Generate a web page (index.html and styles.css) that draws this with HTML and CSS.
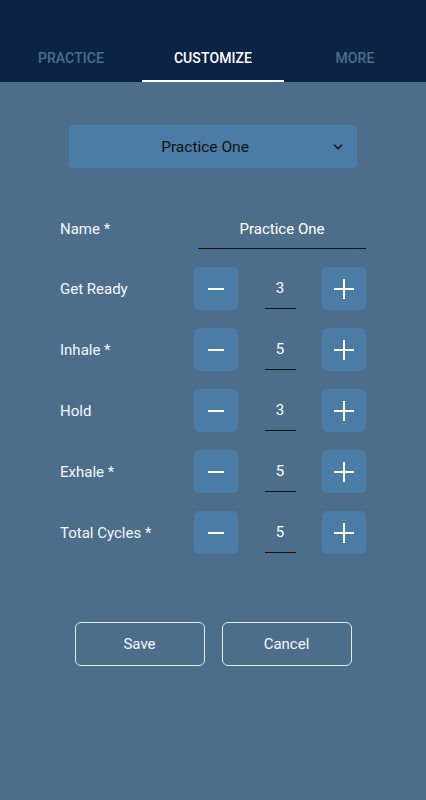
FILE: index.html
```html
<!DOCTYPE html>
<html>
<head>
<meta charset="utf-8">
<link rel="stylesheet" href="styles.css">
</head>
<body>
<header class="appbar">
  <nav class="tabs">
    <div class="tab">PRACTICE</div>
    <div class="tab active">CUSTOMIZE</div>
    <div class="tab">MORE</div>
  </nav>
</header>
<main class="content">
  <div class="select">
    <span class="select-text">Practice One</span>
    <svg class="chevron" width="12" height="8" viewBox="0 0 12 8"><path d="M2 1.8 L6 5.8 L10 1.8" fill="none" stroke="#111" stroke-width="1.5"/></svg>
  </div>
  <form class="form">
    <div class="row">
      <span class="label">Name *</span>
      <div class="text-input">Practice One</div>
    </div>
    <div class="row">
      <span class="label">Get Ready</span>
      <div class="stepper">
        <div class="step-btn"><span class="minus"></span></div>
        <div class="num">3</div>
        <div class="step-btn"><span class="plus"></span></div>
      </div>
    </div>
    <div class="row">
      <span class="label">Inhale *</span>
      <div class="stepper">
        <div class="step-btn"><span class="minus"></span></div>
        <div class="num">5</div>
        <div class="step-btn"><span class="plus"></span></div>
      </div>
    </div>
    <div class="row">
      <span class="label">Hold</span>
      <div class="stepper">
        <div class="step-btn"><span class="minus"></span></div>
        <div class="num">3</div>
        <div class="step-btn"><span class="plus"></span></div>
      </div>
    </div>
    <div class="row">
      <span class="label">Exhale *</span>
      <div class="stepper">
        <div class="step-btn"><span class="minus"></span></div>
        <div class="num">5</div>
        <div class="step-btn"><span class="plus"></span></div>
      </div>
    </div>
    <div class="row">
      <span class="label">Total Cycles *</span>
      <div class="stepper">
        <div class="step-btn"><span class="minus"></span></div>
        <div class="num">5</div>
        <div class="step-btn"><span class="plus"></span></div>
      </div>
    </div>
  </form>
  <div class="actions">
    <div class="btn">Save</div>
    <div class="btn">Cancel</div>
  </div>
</main>
</body>
</html>
```
FILE: styles.css
```css
* { box-sizing: border-box; }
html, body {
  margin: 0;
  padding: 0;
  height: 100%;
}
body {
  background: #4d6e8b;
  font-family: Roboto, "Liberation Sans", sans-serif;
  color: #f5f7fa;
}
.appbar {
  background: #0b2446;
  height: 82px;
  padding-top: 34px;
}
.tabs {
  display: flex;
  height: 48px;
}
.tab {
  flex: 1;
  display: flex;
  align-items: center;
  justify-content: center;
  font-size: 14px;
  font-weight: 500;
  letter-spacing: 0.1px;
  color: #4f6c8e;
  border-bottom: 2px solid transparent;
  padding-top: 2px;
}
.tab.active {
  color: #ffffff;
  border-bottom-color: #ffffff;
}
.content {
  display: flex;
  flex-direction: column;
  align-items: center;
  padding-top: 43px;
}
.select {
  width: 288px;
  height: 43px;
  background: #4b7ca6;
  border-radius: 4px;
  display: flex;
  align-items: center;
  justify-content: center;
  position: relative;
}
.select-text {
  font-size: 15.5px;
  color: #121212;
  margin-left: -16px;
}
.chevron {
  position: absolute;
  right: 13px;
  top: 18px;
}
.form {
  width: 306px;
  margin: 41px 0 0 0;
  display: flex;
  flex-direction: column;
  gap: 18px;
}
.row {
  display: flex;
  align-items: center;
  justify-content: space-between;
}
.label {
  font-size: 15px;
  color: #f5f7fa;
}
.text-input {
  width: 168px;
  height: 40px;
  border-bottom: 1px solid #111;
  display: flex;
  align-items: center;
  justify-content: center;
  font-size: 15px;
  color: #ffffff;
}
.stepper {
  width: 172px;
  height: 43px;
  display: flex;
  align-items: stretch;
  justify-content: space-between;
}
.step-btn {
  width: 44px;
  height: 43px;
  background: #4b7ca6;
  border-radius: 5px;
  position: relative;
}
.minus, .plus::before, .plus::after {
  position: absolute;
  background: #ffffff;
}
.minus {
  width: 16px;
  height: 2px;
  left: 14px;
  top: 21px;
}
.plus::before {
  content: "";
  width: 20px;
  height: 2px;
  left: 12px;
  top: 21px;
}
.plus::after {
  content: "";
  width: 2px;
  height: 20px;
  left: 21px;
  top: 12px;
}
.num {
  width: 31px;
  border-bottom: 1px solid #111;
  display: flex;
  align-items: center;
  justify-content: center;
  font-size: 15px;
  color: #ffffff;
  margin: 0 0 1px 0;
}
.actions {
  display: flex;
  gap: 17px;
  margin-top: 68px;
}
.btn {
  width: 130px;
  height: 44px;
  border: 1.5px solid #e3ebf2;
  border-radius: 6px;
  display: flex;
  align-items: center;
  justify-content: center;
  font-size: 15px;
  color: #f5f7fa;
}
```
